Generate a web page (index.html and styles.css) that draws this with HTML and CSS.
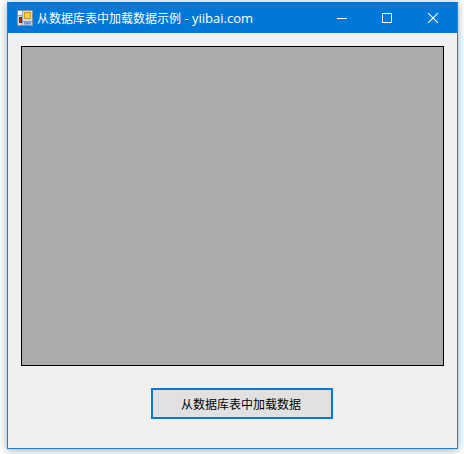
FILE: index.html
```html
<!DOCTYPE html>
<html lang="zh">
<head>
<meta charset="utf-8">
<title>从数据库表中加载数据示例 - yiibai.com</title>
<link rel="stylesheet" href="styles.css">
</head>
<body>
<div class="window">
  <header class="titlebar">
    <svg class="app-icon" width="16" height="16" viewBox="0 0 16 16">
      <rect x="0.5" y="0.5" width="15" height="15" fill="#d5dbe3" stroke="#8b9098"/>
      <path d="M1 5.5H5M5.5 1V15M6 11.5H15" stroke="#8fa3bd" fill="none"/>
      <rect x="1" y="1" width="4" height="4" fill="#eef2f7"/>
      <rect x="7.5" y="2.5" width="6" height="6" fill="#f7cf45" stroke="#c79a1b"/>
      <rect x="2.5" y="7.5" width="2" height="5" fill="#d8261f" stroke="#8d1512"/>
      <rect x="7" y="12" width="7" height="2.5" fill="#6a9be0"/>
    </svg>
    <span class="title">从数据库表中加载数据示例<span class="title-latin"> - yiibai.com</span></span>
    <div class="controls">
      <button class="ctl ctl-min" aria-label="最小化"><svg width="10" height="10" viewBox="0 0 10 10"><path d="M0 5.5H10" stroke="#fff"/></svg></button>
      <button class="ctl" aria-label="最大化"><svg width="10" height="10" viewBox="0 0 10 10"><rect x="0.5" y="0.5" width="9" height="9" fill="none" stroke="#fff"/></svg></button>
      <button class="ctl" aria-label="关闭"><svg width="10" height="10" viewBox="0 0 10 10"><path d="M0 0L10 10M10 0L0 10" stroke="#fff" stroke-width="1.1"/></svg></button>
    </div>
  </header>
  <main class="client">
    <div class="picture"></div>
    <button class="load">从数据库表中加载数据</button>
  </main>
</div>
</body>
</html>
```

FILE: styles.css
```css
* { box-sizing: border-box; }
html, body { margin: 0; height: 100%; }
body {
  background: #fff;
  padding: 2px 6px 5px 7px;
  font-family: "Noto Sans CJK SC", "Open Sans", sans-serif;
  overflow: hidden;
}
.window {
  width: 451px;
  height: 447px;
  display: flex;
  flex-direction: column;
  border: 1px solid #1883d7;
  border-top: 0;
  background: #f0f0f0;
  box-shadow: 0 1px 8px rgba(0, 0, 0, 0.36);
}
.titlebar {
  height: 31px;
  flex: none;
  background: #0078d7;
  display: flex;
  align-items: center;
  padding-left: 9px;
  color: #fff;
}
.app-icon { flex: none; margin-right: 4px; }
.title {
  font-size: 12px;
  line-height: 16px;
  white-space: nowrap;
  font-family: "Noto Sans CJK SC", sans-serif;
  margin-top: 1px;
}
.title-latin {
  font-family: "Open Sans", sans-serif;
  font-size: 13px;
}
.controls { margin-left: auto; display: flex; height: 100%; padding-right: 1px; }
.ctl {
  width: 46px;
  height: 100%;
  border: 0;
  padding: 0;
  background: transparent;
  display: flex;
  align-items: center;
  justify-content: center;
}
.ctl-min { width: 44px; }
.client {
  flex: 1;
  display: flex;
  flex-direction: column;
  align-items: flex-start;
  padding: 13px 0 0 13px;
}
.picture {
  width: 423px;
  height: 320px;
  background: #ababab;
  border: 1px solid #000;
}
.load {
  width: 182px;
  height: 31px;
  margin: 22px 0 0 130px;
  border: 2px solid #0078d7;
  background: #e1e1e1;
  color: #000;
  font: 12px/16px "Noto Sans CJK SC", sans-serif;
  padding: 0 2px 0 0;
}
```
